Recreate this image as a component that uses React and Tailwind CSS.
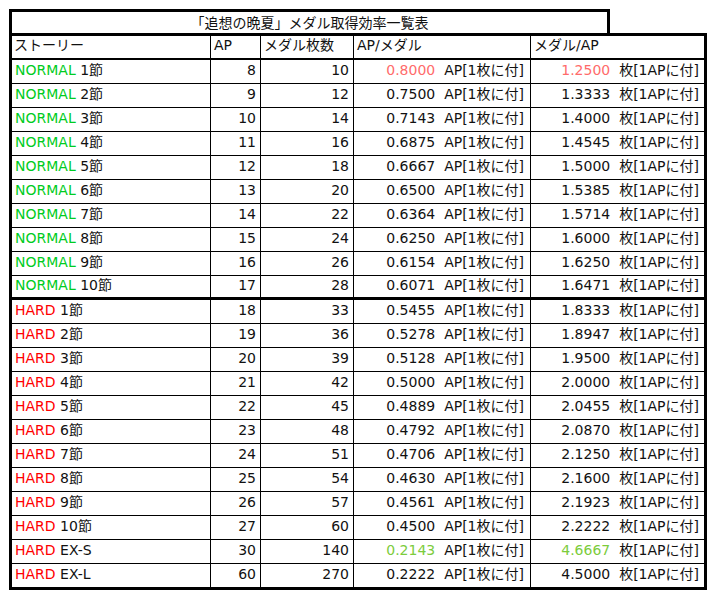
const normal = Array.from({ length: 10 }, (_, i) => ({
  kind: "NORMAL",
  name: `${i + 1}節`,
  ap: 8 + i,
  medals: 10 + i * 2,
}));

const hard = [
  ...Array.from({ length: 10 }, (_, i) => ({
    kind: "HARD",
    name: `${i + 1}節`,
    ap: 18 + i,
    medals: 33 + i * 3,
  })),
  { kind: "HARD", name: "EX-S", ap: 30, medals: 140 },
  { kind: "HARD", name: "EX-L", ap: 60, medals: 270 },
];

const rows = [...normal, ...hard];

// 強調色: 先頭行は赤っぽく、EX-S は緑
const valueColor = (i) => {
  if (i === 0) return "text-[#ff6b6b]";
  if (rows[i].name === "EX-S") return "text-[#7ccc3c]";
  return "";
};

const App = () => {
  return (
    <div className="w-[716px] h-[597px] bg-white text-[14px] text-[#111] font-['DejaVu_Sans','Noto_Sans_CJK_JP',sans-serif] pt-[9px] pl-[9px]">
      {/* タイトル */}
      <div className="w-[601px] h-[24px] border-[3px] border-b-0 border-black flex items-center justify-center leading-none">
        「追想の晩夏」メダル取得効率一覧表
      </div>

      <div className="w-[698px] border-[3px] border-black">
        {/* ヘッダー */}
        <div className="flex h-[24px] border-b-2 border-black leading-none">
          <div className="w-[199px] border-r border-black pl-[2px] flex items-center pb-[5px]">ストーリー</div>
          <div className="w-[50px] border-r border-black pl-[3px] flex items-center pb-[5px]">AP</div>
          <div className="w-[93px] border-r border-black pl-[3px] flex items-center pb-[5px]">メダル枚数</div>
          <div className="w-[177px] border-r border-black pl-[3px] flex items-center pb-[5px]">AP/メダル</div>
          <div className="w-[173px] pl-[3px] flex items-center pb-[5px]">メダル/AP</div>
        </div>

        {rows.map((row, i) => {
          const last = i === rows.length - 1;
          const split = i === 9;
          return (
            <div
              key={i}
              className={`flex leading-none ${
                last
                  ? "h-[23px]"
                  : split
                  ? "h-[24px] border-b-[3px] border-black"
                  : "h-[24px] border-b border-black"
              }`}
            >
              <div className="w-[199px] border-r border-black pl-[3px] pb-[4px] flex items-center">
                <span className={row.kind === "NORMAL" ? "text-[#00cc22]" : "text-[#ff0000]"}>
                  {row.kind}
                </span>
                <span>&nbsp;{row.name}</span>
              </div>
              <div className="w-[50px] border-r border-black pr-[4px] pb-[4px] flex items-center justify-end">
                {row.ap}
              </div>
              <div className="w-[93px] border-r border-black pr-[4px] pb-[4px] flex items-center justify-end">
                {row.medals}
              </div>
              <div className="w-[177px] border-r border-black pr-[6px] pb-[4px] flex items-center justify-end whitespace-pre">
                <span className={valueColor(i)}>{(row.ap / row.medals).toFixed(4)}</span>
                <span>  AP[1枚に付]</span>
              </div>
              <div className="w-[173px] pr-[5px] pb-[4px] flex items-center justify-end whitespace-pre">
                <span className={valueColor(i)}>{(row.medals / row.ap).toFixed(4)}</span>
                <span>  枚[1APに付]</span>
              </div>
            </div>
          );
        })}
      </div>
    </div>
  );
};

export default App;
